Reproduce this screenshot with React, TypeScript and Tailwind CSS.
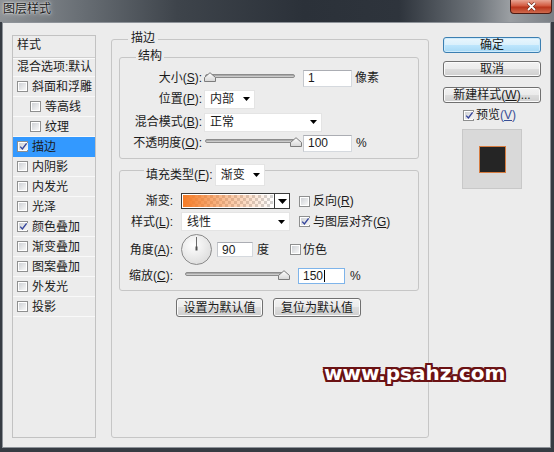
import React from "react";

function U({ c }: { c: string }) {
  return <span className="underline underline-offset-[1px] decoration-1">{c}</span>;
}

function Check({ checked }: { checked?: boolean }) {
  return (
    <span className="w-[11px] h-[11px] shrink-0 border border-[#8e8f8f] bg-white p-[1px] flex">
      <span className="flex-1 bg-[linear-gradient(135deg,#cfd2d6,#f7f7f7)] flex items-center justify-center">
        {checked && (
          <svg width="9" height="9" viewBox="0 0 9 9">
            <path d="M1.2 4.6 L3.4 7 L7.6 1.4" fill="none" stroke="#34449c" strokeWidth="1.4" />
          </svg>
        )}
      </span>
    </span>
  );
}

function Arrow() {
  return (
    <svg width="7" height="4" viewBox="0 0 7 4">
      <path d="M0 0h7L3.5 4z" fill="#000" />
    </svg>
  );
}

function Slider({ className, thumbClass }: { className: string; thumbClass: string }) {
  return (
    <div className={`relative h-[14px] ${className}`}>
      <div className="absolute left-0 right-0 top-[3px] h-[4px] rounded-full border border-[#8c8c8c] bg-[linear-gradient(#9a9a9a,#dcdcdc)]" />
      <svg className={`absolute top-[1px] ${thumbClass}`} width="12" height="10" viewBox="0 0 12 10">
        <defs>
          <linearGradient id="tg" x1="0" y1="0" x2="0" y2="1">
            <stop offset="0" stopColor="#ffffff" />
            <stop offset="1" stopColor="#d6d6d6" />
          </linearGradient>
        </defs>
        <path d="M0.5 9.5V5.5L6 0.7L11.5 5.5V9.5Z" fill="url(#tg)" stroke="#7c7c7c" />
      </svg>
    </div>
  );
}

function Field({ className, text, focus }: { className: string; text: string; focus?: boolean }) {
  return (
    <div
      className={`bg-white border pl-[4px] flex items-center leading-[12px] text-[12px] ${
        focus ? "border-[#7eb4ea]" : "border-[#d5d9de] border-t-[#abadb3] border-l-[#c4c7cc]"
      } ${className}`}
    >
      {text}
      {focus && <span className="w-[1px] h-[12px] bg-black ml-[1px]" />}
    </div>
  );
}

function Drop({ className, text }: { className: string; text: string }) {
  return (
    <div className={`bg-white border border-[#e4e4e4] pl-[5px] pr-[4px] flex items-center justify-between ${className}`}>
      <span>{text}</span>
      <Arrow />
    </div>
  );
}

function Btn({ className, children, def }: { className: string; children: React.ReactNode; def?: boolean }) {
  return (
    <div
      className={`flex items-center justify-center rounded-[3px] border leading-[14px] ${
        def
          ? "border-[#3c7fb1] bg-[linear-gradient(#eaf6fd_0%,#d9f0fc_50%,#bee6fd_50%,#a7d9f5_100%)] shadow-[inset_0_0_0_1px_#cdeafb]"
          : "border-[#707070] bg-[linear-gradient(#f2f2f2_0%,#ebebeb_50%,#dddddd_50%,#cfcfcf_100%)] shadow-[inset_0_0_0_1px_#fbfbfb]"
      } ${className}`}
    >
      {children}
    </div>
  );
}

function Dial() {
  return (
    <svg width="31" height="31" viewBox="0 0 31 31">
      <defs>
        <radialGradient id="dg" cx="0.4" cy="0.35" r="0.7">
          <stop offset="0" stopColor="#ffffff" />
          <stop offset="1" stopColor="#dcdcdc" />
        </radialGradient>
      </defs>
      <circle cx="15.5" cy="15.5" r="15" fill="url(#dg)" stroke="#8a8a8a" />
      <line x1="15.5" y1="15.5" x2="15.5" y2="3" stroke="#6a6a6a" strokeWidth="1" />
      <rect x="14.5" y="12.5" width="2" height="4" fill="#505050" />
    </svg>
  );
}

const items: { t: string; indent?: boolean; checked?: boolean; sel?: boolean }[] = [
  { t: "斜面和浮雕" },
  { t: "等高线", indent: true },
  { t: "纹理", indent: true },
  { t: "描边", checked: true, sel: true },
  { t: "内阴影" },
  { t: "内发光" },
  { t: "光泽" },
  { t: "颜色叠加", checked: true },
  { t: "渐变叠加" },
  { t: "图案叠加" },
  { t: "外发光" },
  { t: "投影" },
];

export default function App() {
  return (
    <div className="w-[554px] h-[452px] relative overflow-hidden bg-[#363c43] text-[12px] leading-[16px] text-[#1b1b1b] font-['Liberation_Sans','Noto_Sans_CJK_SC',sans-serif]">
      {/* Title bar */}
      <div className="h-[22px] flex justify-between bg-[linear-gradient(to_right,#8e9296_0%,#6a7076_14%,#3e444b_32%,#2b3139_55%,#2e343c_72%,#6f757b_86%,#9a9ea2_92%,#7a7f85_100%)]">
        <span className="pl-[3px] pt-[1px] leading-[16px] text-[#202020] [text-shadow:0_0_5px_#e6e6e6,0_0_2px_#ffffff]">图层样式</span>
        <div className="mr-[2px] w-[42px] h-[14px] rounded-b-[4px] border border-t-0 border-[#4c1a12] bg-[linear-gradient(#e8a594_0%,#d25a40_45%,#b9341b_55%,#cf6a4d_100%)] flex items-center justify-center">
          <svg width="11" height="9" viewBox="0 0 11 9">
            <path d="M2 1 L9 8 M9 1 L2 8" stroke="#5a1c10" strokeWidth="3" />
            <path d="M2 1 L9 8 M9 1 L2 8" stroke="#ffffff" strokeWidth="1.8" />
          </svg>
        </div>
      </div>

      {/* Client */}
      <div className="ml-[2px] w-[549px] h-[426px] border border-[#8e9399] bg-[#ececec] flex items-start pl-[9px] pt-[12px]">
        {/* Left list */}
        <div className="w-[84px] h-[403px] border border-[#c2c2c2] flex flex-col">
          <div className="h-[22px] pl-[4px] pt-[1px] border-b border-[#cfcfcf] shadow-[0_1px_0_#fafafa]">样式</div>
          <div className="h-[19px] pl-[4px] flex items-center border-b border-[#f9f9f9] whitespace-nowrap overflow-hidden">混合选项:默认</div>
          {items.map((it) => (
            <div
              key={it.t}
              className={`h-[20px] flex items-center gap-[4px] border-b ${it.indent ? "pl-[17px]" : "pl-[4px]"} ${
                it.sel ? "bg-[#3399ff] border-[#3399ff]" : "border-[#f9f9f9]"
              }`}
            >
              <Check checked={it.checked} />
              <span className="whitespace-nowrap">{it.t}</span>
            </div>
          ))}
        </div>

        {/* Middle group */}
        <div className="ml-[15px] mt-[4px] w-[318px] h-[399px] border border-[#c6c6c6] rounded-[3px] flex flex-col">
          <div className="-mt-[10px] h-[16px] flex">
            <span className="ml-[16px] px-[3px] bg-[#ececec]">描边</span>
          </div>

          {/* 结构 */}
          <div className="ml-[7px] mt-[11px] w-[300px] h-[102px] border border-[#c6c6c6] rounded-[3px] flex flex-col">
            <div className="-mt-[10px] h-[16px] flex">
              <span className="ml-[16px] px-[2px] bg-[#ececec]">结构</span>
            </div>
            <div className="mt-[4px] h-[20px] flex items-center">
              <span className="w-[82px] text-right whitespace-nowrap">大小(<U c="S" />):</span>
              <Slider className="ml-[3px] w-[90px]" thumbClass="left-[-1px]" />
              <Field className="ml-[8px] w-[49px] h-[17px]" text="1" />
              <span className="ml-[3px]">像素</span>
            </div>
            <div className="mt-[1px] h-[20px] flex items-center">
              <span className="w-[82px] text-right whitespace-nowrap">位置(<U c="P" />):</span>
              <Drop className="ml-[2px] w-[51px] h-[19px]" text="内部" />
            </div>
            <div className="mt-[3px] h-[20px] flex items-center">
              <span className="w-[82px] text-right whitespace-nowrap">混合模式(<U c="B" />):</span>
              <Drop className="ml-[2px] w-[118px] h-[19px]" text="正常" />
            </div>
            <div className="mt-[1px] h-[20px] flex items-center">
              <span className="w-[82px] text-right whitespace-nowrap">不透明度(<U c="O" />):</span>
              <Slider className="ml-[3px] w-[90px]" thumbClass="right-[-7px]" />
              <Field className="ml-[8px] w-[49px] h-[17px]" text="100" />
              <span className="ml-[4px]">%</span>
            </div>
          </div>

          {/* 填充类型 */}
          <div className="ml-[7px] mt-[11px] w-[300px] h-[121px] border border-[#c6c6c6] rounded-[3px] flex flex-col">
            <div className="-mt-[7px] h-[22px] flex items-center">
              <span className="ml-[24px] px-[2px] bg-[#ececec] whitespace-nowrap">填充类型(<U c="F" />):</span>
              <Drop className="w-[50px] h-[22px]" text="渐变" />
            </div>
            <div className="mt-[7px] h-[16px] flex items-center">
              <span className="w-[53px] text-right">渐变:</span>
              <div className="ml-[8px] w-[109px] h-[16px] border border-[#3a3a3a] flex">
                <div className="flex-1 border border-white bg-[linear-gradient(to_right,#f57b26,rgba(245,123,38,0.45)_50%,rgba(245,123,38,0)),repeating-conic-gradient(#d4d4d4_0_25%,#ffffff_0_50%)] bg-[length:100%_100%,6px_6px]" />
                <div className="w-[15px] border-l border-[#3a3a3a] bg-white flex items-center justify-center">
                  <svg width="9" height="5" viewBox="0 0 9 5">
                    <path d="M0 0h9L4.5 5z" fill="#000" />
                  </svg>
                </div>
              </div>
              <span className="ml-[9px]"><Check /></span>
              <span className="ml-[3px] whitespace-nowrap">反向(<U c="R" />)</span>
            </div>
            <div className="mt-[3px] h-[19px] flex items-center">
              <span className="w-[53px] text-right whitespace-nowrap">样式(<U c="L" />):</span>
              <Drop className="ml-[8px] w-[109px] h-[19px]" text="线性" />
              <span className="ml-[9px]"><Check checked /></span>
              <span className="ml-[3px] whitespace-nowrap">与图层对齐(<U c="G" />)</span>
            </div>
            <div className="mt-[3px] h-[31px] flex items-center">
              <span className="w-[53px] text-right whitespace-nowrap">角度(<U c="A" />):</span>
              <span className="ml-[8px] flex"><Dial /></span>
              <Field className="ml-[5px] w-[36px] h-[15px]" text="90" />
              <span className="ml-[4px]">度</span>
              <span className="ml-[21px]"><Check /></span>
              <span className="ml-[2px]">仿色</span>
            </div>
            <div className="mt-[2px] h-[17px] flex items-center">
              <span className="w-[53px] text-right whitespace-nowrap">缩放(<U c="C" />):</span>
              <Slider className="ml-[12px] w-[102px]" thumbClass="right-[-3px]" />
              <Field className="ml-[11px] w-[47px] h-[16px]" text="150" focus />
              <span className="ml-[5px]">%</span>
            </div>
          </div>

          <div className="mt-[7px] flex pl-[64px] gap-[10px]">
            <Btn className="w-[87px] h-[19px]">设置为默认值</Btn>
            <Btn className="w-[88px] h-[19px]">复位为默认值</Btn>
          </div>
        </div>

        {/* Right column */}
        <div className="ml-[14px] mt-[2px] w-[98px] flex flex-col">
          <Btn def className="h-[16px]">确定</Btn>
          <Btn className="mt-[8px] h-[16px]">取消</Btn>
          <Btn className="mt-[10px] h-[16px] whitespace-nowrap">新建样式(<U c="W" />)...</Btn>
          <div className="mt-[4px] h-[16px] flex items-center pl-[20px]">
            <Check checked />
            <span className="ml-[2px]">预览<span className="text-[#3a4f96]">(<U c="V" />)</span></span>
          </div>
          <div className="mt-[6px] ml-[19px] w-[60px] h-[60px] bg-[#d9d9d9] border border-[#c8c8c8] flex items-center justify-center">
            <div className="w-[27px] h-[27px] bg-[#252525] border border-[#d77c3f]" />
          </div>
        </div>
      </div>

      {/* Watermark */}
      <div className="absolute left-[324px] top-[363px] text-[20px] leading-[20px] font-bold text-white font-['DejaVu_Sans',sans-serif] [text-shadow:2px_0_#6b1214,-2px_0_#6b1214,0_2px_#6b1214,0_-2px_#6b1214,2px_2px_#6b1214,-2px_-2px_#6b1214,2px_-2px_#6b1214,-2px_2px_#6b1214,0_0_4px_#ffffff]">
        www.psahz.com
      </div>
    </div>
  );
}
